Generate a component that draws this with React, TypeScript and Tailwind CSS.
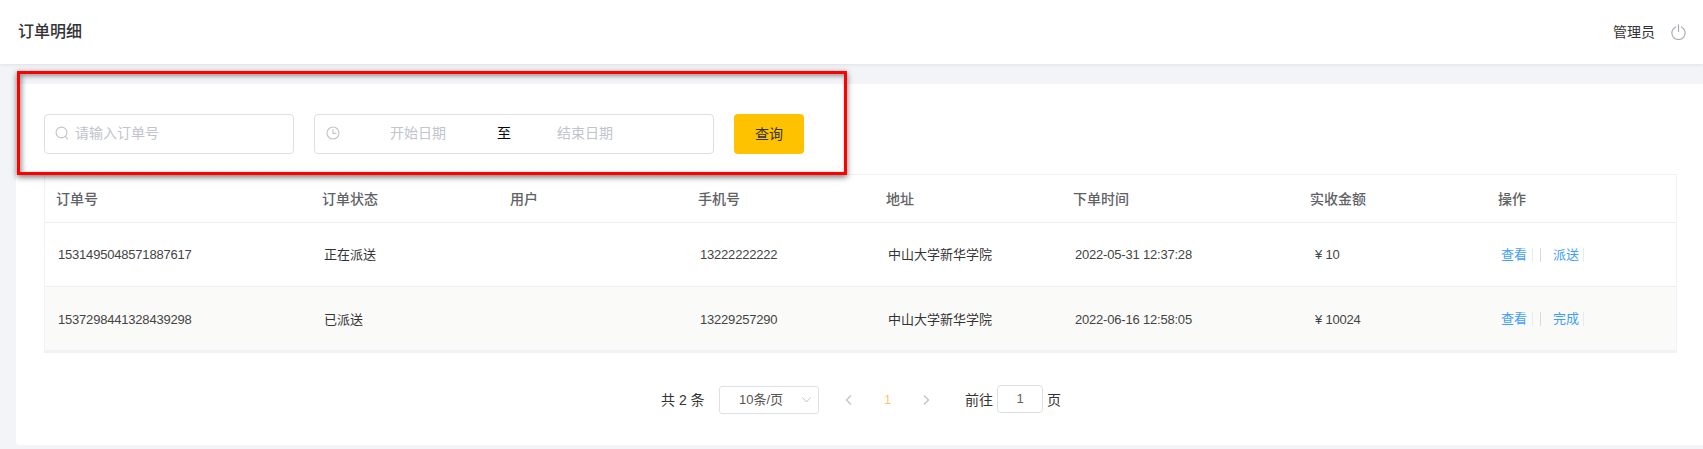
import React from "react";

interface OrderRow {
  id: string;
  status: string;
  user: string;
  phone: string;
  address: string;
  time: string;
  amount: string;
  action: string;
}

const orders: OrderRow[] = [
  {
    id: "1531495048571887617",
    status: "正在派送",
    user: "",
    phone: "13222222222",
    address: "中山大学新华学院",
    time: "2022-05-31 12:37:28",
    amount: "¥ 10",
    action: "派送",
  },
  {
    id: "1537298441328439298",
    status: "已派送",
    user: "",
    phone: "13229257290",
    address: "中山大学新华学院",
    time: "2022-06-16 12:58:05",
    amount: "¥ 10024",
    action: "完成",
  },
];

const App: React.FC = () => {
  return (
    <div className="relative h-[449px] w-[1703px] overflow-hidden bg-[#f3f4f7] font-['Liberation_Sans','Noto_Sans_CJK_SC',sans-serif] text-[#333]">
      {/* Header */}
      <header className="flex h-16 items-center justify-between bg-white pl-[18px] pr-[17px] shadow-[0_1px_3px_rgba(0,0,0,0.08)]">
        <h1 className="text-base leading-none font-medium text-[#333]">订单明细</h1>
        <div className="flex items-center gap-4">
          <span className="text-[14px] leading-none text-[#333]">管理员</span>
          <svg width="15" height="16" viewBox="0 0 15 16" fill="none" stroke="#a9adb8" strokeWidth="1.2" strokeLinecap="round">
            <path d="M4.6 3A6.6 6.6 0 1 0 10.4 3" />
            <path d="M7.5 .8V7.5" />
          </svg>
        </div>
      </header>

      {/* Card */}
      <main className="pl-4 pt-5">
        <section className="h-[361px] rounded-l-[3px] bg-white pl-[28px] pr-[26px] pt-[30px]">
          {/* Filters */}
          <div className="flex h-10 items-center">
            <div className="flex h-10 w-[250px] items-center rounded-[4px] border border-[#dcdfe6] pl-[10px]">
              <svg width="14" height="14" viewBox="0 0 14 14" fill="none" stroke="#c0c4cc" strokeWidth="1.1" strokeLinecap="round" className="-translate-y-px">
                <circle cx="6.5" cy="6.5" r="5.4" />
                <path d="M10.5 10.6L12.6 12.8" />
              </svg>
              <span className="ml-[6px] -translate-y-px text-[14px] text-[#c0c4cc]">请输入订单号</span>
            </div>
            <div className="ml-5 flex h-10 w-[400px] items-center rounded-[4px] border border-[#dcdfe6] pl-[11px]">
              <svg width="14" height="14" viewBox="0 0 14 14" fill="none" stroke="#c0c4cc" strokeWidth="1.1" strokeLinecap="round" className="-translate-y-px">
                <circle cx="7" cy="7" r="6" />
                <path d="M7 3.5V7.4H10" />
              </svg>
              <span className="ml-[50px] -translate-y-px text-[14px] text-[#c0c4cc]">开始日期</span>
              <span className="ml-[51px] -translate-y-px text-[14px] text-black">至</span>
              <span className="ml-[46px] -translate-y-px text-[14px] text-[#c0c4cc]">结束日期</span>
            </div>
            <button className="ml-5 h-10 w-[70px] rounded-[4px] bg-[#ffc200] text-[14px] text-[#333]">查询</button>
          </div>

          {/* Table */}
          <div className="mt-5 border-x border-t border-b-[3px] border-[#f1f2f6]">
            <table className="w-full table-fixed border-collapse">
              <thead>
                <tr className="h-[47px] border-b border-[#ebeef5] text-left text-[14px] text-[#606266]">
                  <th className="w-[266px] pl-[11px] pt-[2px] font-medium">订单号</th>
                  <th className="w-[188px] pl-[11px] pt-[2px] font-medium">订单状态</th>
                  <th className="w-[188px] pl-[11px] pt-[2px] font-medium">用户</th>
                  <th className="w-[188px] pl-[11px] pt-[2px] font-medium">手机号</th>
                  <th className="w-[187px] pl-[11px] pt-[2px] font-medium">地址</th>
                  <th className="w-[237px] pl-[11px] pt-[2px] font-medium">下单时间</th>
                  <th className="w-[188px] pl-[11px] pt-[2px] font-medium">实收金额</th>
                  <th className="pl-[11px] pt-[2px] font-medium">操作</th>
                </tr>
              </thead>
              <tbody>
                {orders.map((order, index) => (
                  <tr
                    key={order.id}
                    className={`h-16 text-[13px] text-[#333] ${
                      index === 0 ? "border-b border-[#ebeef5] bg-white" : "bg-[#fafaf8]"
                    }`}
                  >
                    <td className="pl-[13px] pt-[2px] tracking-[-0.2px] text-[#444]">{order.id}</td>
                    <td className="pl-[13px] pt-[2px]">{order.status}</td>
                    <td className="pl-[13px] pt-[2px]">{order.user}</td>
                    <td className="pl-[13px] pt-[2px] tracking-[-0.2px] text-[#444]">{order.phone}</td>
                    <td className="pl-[13px] pt-[2px]">{order.address}</td>
                    <td className="pl-[13px] pt-[2px] tracking-[-0.2px] text-[#444]">{order.time}</td>
                    <td className="pl-[16px] pt-[2px] tracking-[-0.2px] text-[#444]">{order.amount}</td>
                    <td className="pl-[14px] pt-[2px]">
                      <div className="flex h-[14px] items-center text-[#409eff]">
                        <span className="h-[14px] border-r border-[#e8eaee] pr-[5px] leading-[14px]">查看</span>
                        <span className="ml-[7px] h-[14px] w-px bg-[#d8dade]" />
                        <span className="ml-[12px] h-[14px] border-r border-[#e8eaee] pr-[4px] leading-[14px]">{order.action}</span>
                      </div>
                    </td>
                  </tr>
                ))}
              </tbody>
            </table>
          </div>

          {/* Pagination */}
          <div className="mt-[33px] flex items-center text-[14px] text-[#333]">
            <span className="ml-[617px] w-[58px]">共 2 条</span>
            <div className="flex h-7 w-[100px] items-center rounded-[3px] border border-[#dcdfe6] pl-[19px] text-[13px] text-[#555]">
              <span className="w-[63px]">10条/页</span>
              <svg width="9" height="6" viewBox="0 0 9 6" fill="none" stroke="#c0c4cc" strokeWidth="1">
                <path d="M.5 .5L4.5 5L8.5 .5" />
              </svg>
            </div>
            <svg width="7" height="10" viewBox="0 0 7 10" fill="none" stroke="#c0c4cc" strokeWidth="1.4" className="ml-[26px]">
              <path d="M6 .5L1.5 5L6 9.5" />
            </svg>
            <span className="ml-[32px] w-[39px] text-[13px] text-[#ffc56b]">1</span>
            <svg width="7" height="10" viewBox="0 0 7 10" fill="none" stroke="#c0c4cc" strokeWidth="1.4">
              <path d="M1 .5L5.5 5L1 9.5" />
            </svg>
            <span className="ml-[35px]">前往</span>
            <div className="ml-[4px] flex h-7 w-[46px] -translate-y-px items-center justify-center rounded-[4px] border border-[#dcdfe6] text-[13px] text-[#606266]">
              1
            </div>
            <span className="ml-[4px]">页</span>
          </div>
        </section>
      </main>

      {/* Red annotation box */}
      <div className="absolute left-[17px] top-[71px] h-[104px] w-[830px] border-[3px] border-[#ff0000] shadow-[0_2px_6px_rgba(0,0,0,0.55),inset_2px_2px_5px_rgba(0,0,0,0.4)]" />
    </div>
  );
};

export default App;
